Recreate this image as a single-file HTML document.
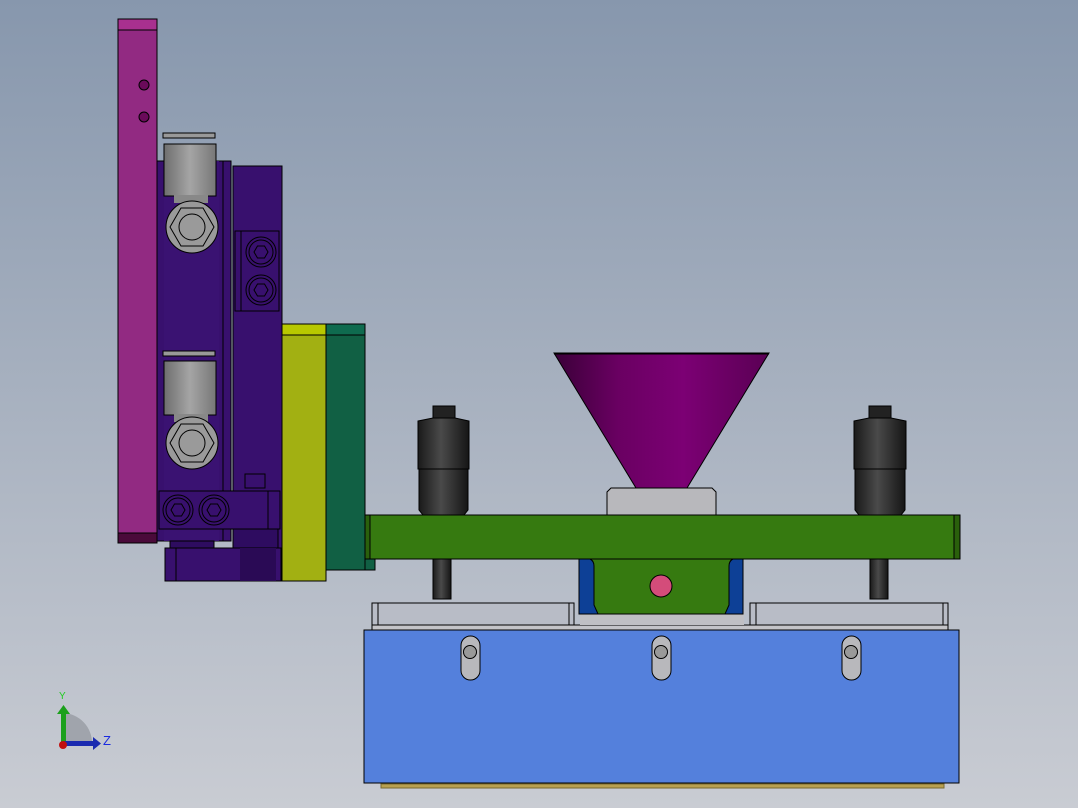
<!DOCTYPE html>
<html><head><style>html,body{margin:0;padding:0;width:1078px;height:808px;overflow:hidden}</style></head>
<body>
<svg width="1078" height="808" viewBox="0 0 1078 808" xmlns="http://www.w3.org/2000/svg" stroke="#000" stroke-width="1">
<defs>
<linearGradient id="bg" x1="0" y1="0" x2="0" y2="1"><stop offset="0" stop-color="#8797ad"/><stop offset="1" stop-color="#c9ccd3"/></linearGradient>
<linearGradient id="cyl" x1="0" y1="0" x2="1" y2="0"><stop offset="0" stop-color="#1a1a1a"/><stop offset="0.45" stop-color="#4a4a4a"/><stop offset="1" stop-color="#151515"/></linearGradient>
<linearGradient id="gcyl" x1="0" y1="0" x2="1" y2="0"><stop offset="0" stop-color="#6e6e6e"/><stop offset="0.5" stop-color="#a5a5a5"/><stop offset="1" stop-color="#777"/></linearGradient>
<linearGradient id="fun" x1="0" y1="0" x2="1" y2="0"><stop offset="0" stop-color="#3a0038"/><stop offset="0.3" stop-color="#6a0062"/><stop offset="0.6" stop-color="#7c0074"/><stop offset="1" stop-color="#5a0054"/></linearGradient>
</defs>
<rect x="0" y="0" width="1078" height="808" fill="url(#bg)" stroke="none"/>

<!-- magenta bar -->
<rect x="118" y="19" width="39" height="524" fill="#922a82"/>
<rect x="118" y="19" width="39" height="11" fill="#a8308f"/>
<rect x="118" y="533" width="39" height="10" fill="#4a0a3a"/>
<circle cx="144" cy="85" r="5" fill="#6a0a5a"/><circle cx="144" cy="117" r="5" fill="#6a0a5a"/>

<!-- purple body -->
<rect x="157" y="161" width="74" height="380" fill="#38106e"/>
<rect x="164" y="161" width="55" height="380" fill="#3a1272" stroke="none"/>
<line x1="223" y1="161" x2="223" y2="541"/>
<rect x="233" y="166" width="49" height="382" fill="#38106e"/>
<rect x="235" y="231" width="44" height="80" fill="#38106e"/>
<line x1="241" y1="231" x2="241" y2="311"/>
<g fill="none"><circle cx="261" cy="252" r="15"/><circle cx="261" cy="252" r="12"/><polygon points="254,252 257.5,246 264.5,246 268,252 264.5,258 257.5,258"/>
<circle cx="261" cy="290" r="15"/><circle cx="261" cy="290" r="12"/><polygon points="254,290 257.5,284 264.5,284 268,290 264.5,296 257.5,296"/></g>

<!-- gray cylinders + nuts -->
<rect x="163" y="133" width="52" height="5" fill="#999"/>
<rect x="164" y="144" width="52" height="52" fill="url(#gcyl)"/>
<rect x="174" y="195" width="34" height="8" fill="#888" stroke="none"/>
<circle cx="192" cy="227" r="26" fill="#9a9a9a"/><polygon points="170,227 181,208 203,208 214,227 203,246 181,246" fill="none"/><circle cx="192" cy="227" r="13" fill="none"/>
<rect x="163" y="351" width="52" height="5" fill="#999"/>
<rect x="164" y="361" width="52" height="54" fill="url(#gcyl)"/>
<rect x="174" y="414" width="34" height="8" fill="#888" stroke="none"/>
<circle cx="192" cy="443" r="26" fill="#9a9a9a"/><polygon points="170,443 181,424 203,424 214,443 203,462 181,462" fill="none"/><circle cx="192" cy="443" r="13" fill="none"/>

<!-- bottom purple blocks -->
<rect x="245" y="474" width="20" height="14" fill="#38106e"/>
<rect x="159" y="491" width="121" height="38" fill="#38106e"/>
<line x1="268" y1="491" x2="268" y2="529"/>
<g fill="none"><circle cx="178" cy="510" r="15"/><circle cx="178" cy="510" r="12"/><polygon points="171,510 174.5,504 181.5,504 185,510 181.5,516 174.5,516"/>
<circle cx="214" cy="510" r="15"/><circle cx="214" cy="510" r="12"/><polygon points="207,510 210.5,504 217.5,504 221,510 217.5,516 210.5,516"/></g>
<rect x="233" y="529" width="45" height="19" fill="#2e0c60"/>
<rect x="170" y="541" width="44" height="8" fill="#2e0c60"/>
<rect x="165" y="548" width="116" height="33" fill="#38106e"/>
<line x1="176" y1="548" x2="176" y2="581"/>
<rect x="240" y="548" width="36" height="33" fill="#2a0a55" stroke="none"/>

<!-- yellow & green blocks -->
<rect x="282" y="324" width="44" height="257" fill="#a2b012"/>
<rect x="282" y="324" width="44" height="11" fill="#b8c800"/>
<rect x="326" y="324" width="39" height="246" fill="#116044"/>
<rect x="326" y="324" width="39" height="11" fill="#0f6b4f"/>
<rect x="365" y="541" width="10" height="29" fill="#116044"/>

<!-- funnel -->
<polygon points="554,353 769,353 687,488 636,488" fill="url(#fun)"/>
<line x1="554" y1="354" x2="769" y2="354"/>
<path d="M607,515 V492 L611,488 H712 L716,492 V515" fill="#b8b8bc"/>

<!-- black cylinders -->
<g>
<rect x="433" y="406" width="22" height="12" fill="#222"/>
<path d="M418,421 L433,418 H455 L469,421 V469 H418 Z" fill="url(#cyl)"/>
<path d="M419,469 H468 V510 L464,515 H423 L419,510 Z" fill="url(#cyl)"/>
<rect x="433" y="559" width="18" height="40" fill="url(#cyl)"/>
<rect x="869" y="406" width="22" height="12" fill="#222"/>
<path d="M854,421 L869,418 H891 L906,421 V469 H854 Z" fill="url(#cyl)"/>
<path d="M855,469 H905 V510 L901,515 H859 L855,510 Z" fill="url(#cyl)"/>
<rect x="870" y="559" width="18" height="40" fill="url(#cyl)"/>
</g>

<!-- rails -->
<rect x="372" y="603" width="202" height="22" fill="#b8bcc6"/>
<line x1="378" y1="603" x2="378" y2="625"/><line x1="569" y1="603" x2="569" y2="625"/>
<rect x="750" y="603" width="198" height="22" fill="#b8bcc6"/>
<line x1="756" y1="603" x2="756" y2="625"/><line x1="943" y1="603" x2="943" y2="625"/>
<rect x="372" y="625" width="576" height="5" fill="#c4c4c8"/>
<rect x="580" y="612" width="164" height="13" fill="#c0c0c4" stroke="none"/>

<!-- center lower green with blue sides -->
<rect x="579" y="559" width="164" height="55" fill="#0d4096"/>
<path d="M590,559 Q594,561 594,566 V605 L598,614 H725 L729,605 V566 Q729,561 733,559 Z" fill="#367a10"/>
<circle cx="661" cy="586" r="11" fill="#d44c7a"/>

<!-- green plate -->
<rect x="365" y="515" width="595" height="44" fill="#367a10"/>
<rect x="365" y="515" width="5" height="44" fill="#2a600c"/>
<rect x="954" y="515" width="6" height="44" fill="#2a600c"/>

<!-- blue block -->
<rect x="364" y="630" width="595" height="153" fill="#5480dc"/>
<g fill="#b8b8bc">
<rect x="461" y="636" width="19" height="44" rx="9.5"/><circle cx="470" cy="652" r="6.5" fill="#999"/>
<rect x="652" y="636" width="19" height="44" rx="9.5"/><circle cx="661" cy="652" r="6.5" fill="#999"/>
<rect x="842" y="636" width="19" height="44" rx="9.5"/><circle cx="851" cy="652" r="6.5" fill="#999"/>
</g>
<rect x="381" y="784" width="563" height="4" fill="#b8a050" stroke="#7a6a30"/>

<!-- axis triad -->
<path d="M64,713 A30,30 0 0 1 92,743 H64 Z" fill="#a0a4ac" stroke="none"/>
<rect x="61" y="712" width="5" height="31" fill="#1ca01c" stroke="none"/>
<polygon points="57,714 63.5,705 70,714" fill="#1ca01c" stroke="none"/>
<rect x="64" y="741" width="30" height="5" fill="#1a2ab0" stroke="none"/>
<polygon points="93,737 101,743.5 93,750" fill="#1a2ab0" stroke="none"/>
<circle cx="63" cy="745" r="4" fill="#c01010" stroke="none"/>
<text x="59" y="699" font-family="Liberation Sans, sans-serif" font-size="10" fill="#22cc22" stroke="none">Y</text>
<text x="103" y="745" font-family="Liberation Sans, sans-serif" font-size="13" fill="#1a2ae0" stroke="none">Z</text>
</svg>
</body></html>
